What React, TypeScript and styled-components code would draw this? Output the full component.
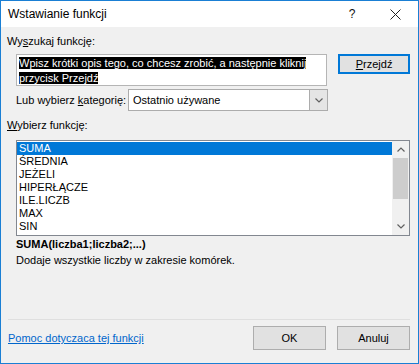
import styled, { createGlobalStyle } from "styled-components";

const Global = createGlobalStyle`
  html, body { margin: 0; padding: 0; background: #f0f0f0; }
  * { box-sizing: border-box; }
`;

const Window = styled.div`
  width: 419px;
  height: 364px;
  border: 1px solid #1a7fd4;
  background: #f0f0f0;
  display: flex;
  flex-direction: column;
  font-family: "Liberation Sans", Arial, sans-serif;
  font-size: 11px;
  color: #000;
`;

const TitleBar = styled.div`
  height: 26px;
  background: #fff;
  display: flex;
  align-items: center;
  padding-left: 7px;
  font-size: 12px;
`;

const TitleText = styled.div`
  flex: 1;
`;

const TitleButton = styled.div<{ $w: number }>`
  width: ${(p) => p.$w}px;
  display: flex;
  justify-content: center;
  align-items: center;
  color: #111;
`;

const Body = styled.div`
  flex: 1;
  display: flex;
  flex-direction: column;
  padding: 7px 8px 0 6px;
`;

const Label = styled.div<{ $gap?: number }>`
  height: 15px;
  line-height: 15px;
  margin-top: ${(p) => p.$gap ?? 0}px;
`;

const SearchRow = styled.div`
  display: flex;
  margin-top: 5px;
  margin-left: 9px;
  gap: 11px;
  align-items: flex-start;
`;

const SearchBox = styled.div`
  width: 312px;
  height: 32px;
  background: #fff;
  border: 1px solid #b5b5b5;
  padding: 1px 2px;
  line-height: 15px;
  white-space: nowrap;
  overflow: hidden;
`;

const Selected = styled.span`
  background: #000;
  color: #fff;
`;

const Button = styled.div<{ $focus?: boolean; $w: number; $h: number }>`
  width: ${(p) => p.$w}px;
  height: ${(p) => p.$h}px;
  background: #e1e1e1;
  border: ${(p) => (p.$focus ? "2px solid #0078d7" : "1px solid #adadad")};
  display: flex;
  align-items: center;
  justify-content: center;
`;

const CategoryRow = styled.div`
  display: flex;
  align-items: center;
  margin-top: 3px;
  margin-left: 9px;
  gap: 4px;
`;

const CategoryLabel = styled.span`
  width: 108px;
  white-space: nowrap;
`;

const Select = styled.div`
  width: 200px;
  height: 22px;
  background: #fff;
  border: 1px solid #acacac;
  display: flex;
  align-items: center;
`;

const SelectValue = styled.div`
  flex: 1;
  padding-left: 4px;
`;

const SelectArrow = styled.div`
  width: 18px;
  height: 20px;
  background: #e5e5e5;
  border-left: 1px solid #acacac;
  display: flex;
  align-items: center;
  justify-content: center;
`;

const ListBox = styled.div`
  margin-top: 7px;
  margin-left: 9px;
  height: 96px;
  border: 1px solid #828790;
  background: #fff;
  display: flex;
`;

const Items = styled.div`
  flex: 1;
  padding-top: 1px;
`;

const Item = styled.div<{ $sel?: boolean }>`
  height: 13px;
  line-height: 13px;
  padding-left: 2px;
  background: ${(p) => (p.$sel ? "#0078d7" : "transparent")};
  color: ${(p) => (p.$sel ? "#fff" : "#000")};
`;

const ScrollBar = styled.div`
  width: 17px;
  display: flex;
  flex-direction: column;
  background: #f0f0f0;
`;

const ScrollArrow = styled.div`
  height: 17px;
  display: flex;
  align-items: center;
  justify-content: center;
`;

const ScrollTrack = styled.div`
  flex: 1;
  padding: 0 1px;
`;

const Thumb = styled.div`
  height: 41px;
  background: #cdcdcd;
`;

const Syntax = styled.div`
  font-weight: bold;
  margin-top: 1px;
  margin-left: 9px;
  height: 15px;
  line-height: 15px;
`;

const Desc = styled.div`
  margin-top: 1px;
  margin-left: 9px;
  height: 15px;
  line-height: 15px;
`;

const Spacer = styled.div`
  flex: 1;
`;

const Separator = styled.div`
  height: 1px;
  background: #dfdfdf;
  margin-left: 1px;
`;

const Footer = styled.div`
  display: flex;
  align-items: center;
  height: 43px;
  padding-bottom: 7px;
  margin-left: 1px;
`;

const HelpLink = styled.a`
  flex: 1;
  color: #0066cc;
  text-decoration: underline;
`;

const Buttons = styled.div`
  display: flex;
  gap: 11px;
`;

const U = styled.span`
  text-decoration: underline;
`;

const Chevron = ({ up }: { up?: boolean }) => (
  <svg width="8" height="5" viewBox="0 0 8 5">
    <path
      d={up ? "M0.5 4.5 L4 1 L7.5 4.5" : "M0.5 0.5 L4 4 L7.5 0.5"}
      stroke="#606060"
      strokeWidth="1.2"
      fill="none"
    />
  </svg>
);

const functions = ["SUMA", "ŚREDNIA", "JEŻELI", "HIPERŁĄCZE", "ILE.LICZB", "MAX", "SIN"];

export default function App() {
  return (
    <>
      <Global />
      <Window>
        <TitleBar>
          <TitleText>Wstawianie funkcji</TitleText>
          <TitleButton $w={40}>?</TitleButton>
          <TitleButton $w={46}>
            <svg width="11" height="11" viewBox="0 0 11 11">
              <path d="M0.5 0.5 L10.5 10.5 M10.5 0.5 L0.5 10.5" stroke="#222" strokeWidth="1" />
            </svg>
          </TitleButton>
        </TitleBar>
        <Body>
          <Label>
            Wy<U>s</U>zukaj funkcję:
          </Label>
          <SearchRow>
            <SearchBox>
              <Selected>Wpisz krótki opis tego, co chcesz zrobić, a następnie kliknij</Selected>
              <br />
              <Selected>przycisk Przejdź</Selected>
            </SearchBox>
            <Button $focus $w={72} $h={20}>
              <span>
                <U>P</U>rzejdź
              </span>
            </Button>
          </SearchRow>
          <CategoryRow>
            <CategoryLabel>
              Lub wybierz <U>k</U>ategorię:
            </CategoryLabel>
            <Select>
              <SelectValue>Ostatnio używane</SelectValue>
              <SelectArrow>
                <Chevron />
              </SelectArrow>
            </Select>
          </CategoryRow>
          <Label $gap={7}>
            <U>W</U>ybierz funkcję:
          </Label>
          <ListBox>
            <Items>
              {functions.map((f, i) => (
                <Item key={f} $sel={i === 0}>
                  {f}
                </Item>
              ))}
            </Items>
            <ScrollBar>
              <ScrollArrow>
                <Chevron up />
              </ScrollArrow>
              <ScrollTrack>
                <Thumb />
              </ScrollTrack>
              <ScrollArrow>
                <Chevron />
              </ScrollArrow>
            </ScrollBar>
          </ListBox>
          <Syntax>SUMA(liczba1;liczba2;...)</Syntax>
          <Desc>Dodaje wszystkie liczby w zakresie komórek.</Desc>
          <Spacer />
          <Separator />
          <Footer>
            <HelpLink>Pomoc dotyczaca tej funkcji</HelpLink>
            <Buttons>
              <Button $w={73} $h={24}>OK</Button>
              <Button $w={73} $h={24}>Anuluj</Button>
            </Buttons>
          </Footer>
        </Body>
      </Window>
    </>
  );
}
